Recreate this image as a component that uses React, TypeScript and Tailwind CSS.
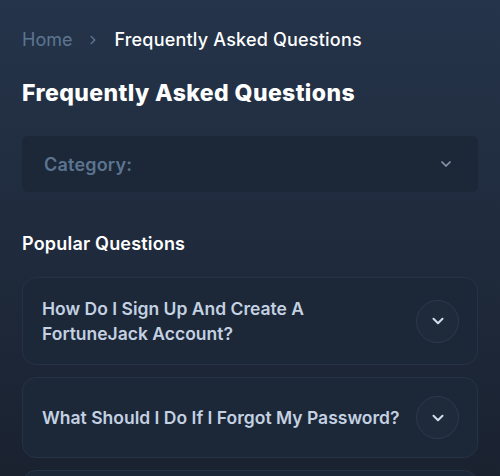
import { ChevronDown, ChevronRight } from "lucide-react";

const questions = [
    "How Do I Sign Up And Create A FortuneJack Account?",
    "What Should I Do If I Forgot My Password?",
    "How Can I Deposit Funds Into My Account?",
];

function QuestionCard({ text }: { text: string }) {
    return (
        <div className="flex items-center justify-between gap-2 rounded-[14px] border border-[#263347] bg-[#1c2737] pl-[19px] pr-[18px] py-[18px]">
            <p className="text-[17.5px] font-semibold leading-[25px] text-[#c3d1e2]">{text}</p>
            <button className="flex h-[43px] w-[43px] shrink-0 items-center justify-center rounded-full border border-[#2d3b50] bg-[#1f2a3b] text-[#d0dcea]">
                <ChevronDown size={18} strokeWidth={2.75} />
            </button>
        </div>
    );
}

export default function App() {
    return (
        <div
            className="h-[476px] w-[500px] overflow-hidden bg-gradient-to-b from-[#25344a] to-[#1a2230] px-[22px] pt-[28px]"
            style={{ fontFamily: "Inter, 'Noto Sans', sans-serif" }}
        >
            {/* Breadcrumb */}
            <nav className="flex items-center text-[18px] leading-6">
                <span className="text-[#5c7691]">Home</span>
                <ChevronRight size={14} strokeWidth={2.5} className="mx-[14px] text-[#5c7691]" />
                <span className="font-medium tracking-[0.2px] text-white">Frequently Asked Questions</span>
            </nav>

            <h1 className="mt-[27px] text-[23px] font-extrabold leading-7 tracking-[0.4px] text-white">
                Frequently Asked Questions
            </h1>

            {/* Category select */}
            <div className="mt-[29px] flex h-14 items-center justify-between rounded-md bg-[#1c2738] pl-[22px] pr-6">
                <span className="text-[18px] font-semibold tracking-[0.2px] text-[#5b7590]">Category:</span>
                <ChevronDown size={16} strokeWidth={2.5} className="text-[#8a9bb0]" />
            </div>

            <h2 className="mt-[40px] text-[18px] font-semibold leading-6 tracking-[0.2px] text-white">Popular Questions</h2>

            <div className="mt-[21px] flex flex-col gap-3">
                {questions.map((q) => (
                    <QuestionCard key={q} text={q} />
                ))}
            </div>
        </div>
    );
}
